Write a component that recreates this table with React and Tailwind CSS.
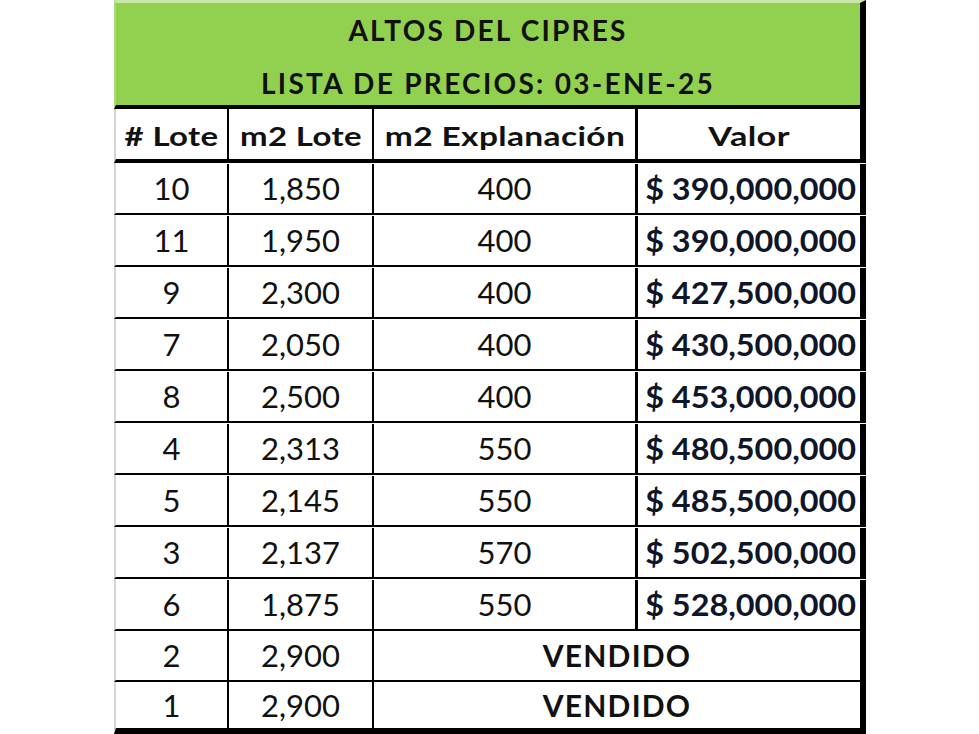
const rows = [
  ["10", "1,850", "400", "390,000,000"],
  ["11", "1,950", "400", "390,000,000"],
  ["9", "2,300", "400", "427,500,000"],
  ["7", "2,050", "400", "430,500,000"],
  ["8", "2,500", "400", "453,000,000"],
  ["4", "2,313", "550", "480,500,000"],
  ["5", "2,145", "550", "485,500,000"],
  ["3", "2,137", "570", "502,500,000"],
  ["6", "1,875", "550", "528,000,000"],
];

const sold = [
  ["2", "2,900", "h-[51px]", "border-b-2"],
  ["1", "2,900", "h-[52px]", "border-b-[6px]"],
];

const cell = "flex items-center justify-center border-r-2 border-black";

const App = () => {
  return (
    <div className="w-[979px] h-[734px] bg-white overflow-hidden font-['Lato',sans-serif] text-[#111111]">
      <div className="ml-[114px] w-[752px]">
        {/* title block */}
        <div className="h-[109px] bg-[#92d050] border-t-[3px] border-t-[#c9e8a8] border-l-2 border-l-[#a9dc78] border-r-[6px] border-r-black border-b-4 border-b-black flex flex-col items-center">
          <div className="h-[52px] flex items-center font-bold text-[28px] tracking-[2.2px] pt-[1px]">
            ALTOS DEL CIPRES
          </div>
          <div className="h-[50px] flex items-center font-bold text-[28px] tracking-[2.3px] pt-[6px]">
            LISTA DE PRECIOS: 03-ENE-25
          </div>
        </div>

        {/* header */}
        <div className="flex h-[54px] border-b-4 border-black border-l-2 border-l-[#d4d4d4] font-bold text-[27px] tracking-[0.3px]">
          <div className={`${cell} w-[113px] pt-[5px]`}>
            <span className="inline-block scale-x-[1.22]"># Lote</span>
          </div>
          <div className={`${cell} w-[145px] pt-[5px]`}>
            <span className="inline-block scale-x-[1.22]">m2 Lote</span>
          </div>
          <div className={`${cell} w-[264px] border-r-[3px] pt-[5px]`}>
            <span className="inline-block scale-x-[1.24]">m2 Explanación</span>
          </div>
          <div className={`${cell} w-[228px] border-r-[6px] pt-[5px]`}>
            <span className="inline-block scale-x-[1.27]">Valor</span>
          </div>
        </div>

        {rows.map((r) => (
          <div key={r[0]} className="flex h-[52px] border-b-2 border-black border-l-2 border-l-[#d4d4d4] text-[31px] pt-[1px]">
            <div className={`${cell} w-[113px]`}>{r[0]}</div>
            <div className={`${cell} w-[145px]`}>{r[1]}</div>
            <div className={`${cell} w-[264px] border-r-[3px]`}>{r[2]}</div>
            <div className="w-[228px] border-r-[6px] border-black flex items-center justify-center pl-[4px] font-bold text-[30px] text-[#0f1629]">
              <span className="inline-block scale-x-[1.08]">$ {r[3]}</span>
            </div>
          </div>
        ))}

        {sold.map(([n, m, h, b]) => (
          <div key={n} className={`flex ${h} ${b} border-black border-l-2 border-l-[#d4d4d4] text-[31px]`}>
            <div className={`${cell} w-[113px]`}>{n}</div>
            <div className={`${cell} w-[145px]`}>{m}</div>
            <div className="w-[492px] border-r-[6px] border-black flex items-center justify-center font-bold text-[30px] tracking-[1.2px]">
              VENDIDO
            </div>
          </div>
        ))}
      </div>
    </div>
  );
};

export default App;
